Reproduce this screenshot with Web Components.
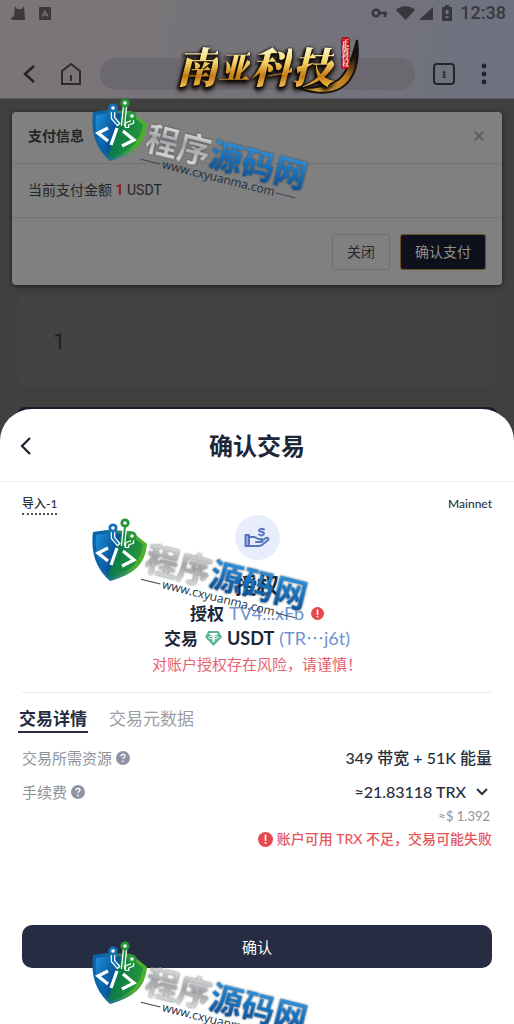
<!DOCTYPE html>
<html lang="zh-CN">
<head>
<meta charset="utf-8">
<meta name="viewport" content="width=device-width, initial-scale=1">
<title>确认交易</title>
<style>
  body {
    margin: 0;
    background: #404040;
    font-family: Lato, "Noto Sans CJK SC", sans-serif;
  }
</style>
</head>
<body>
<app-screen>
  <status-bar time="12:38"></status-bar>
  <browser-bar tabs="1"><brand-logo></brand-logo></browser-bar>
  <pay-page>
    <pay-dialog heading="支付信息">当前支付金额 <b>1</b> USDT</pay-dialog>
  </pay-page>
  <confirm-sheet heading="确认交易">
    <account-row slot="account" name="导入-1" network="Mainnet"></account-row>
    <approval-summary slot="summary"></approval-summary>
    <detail-tabs slot="details"></detail-tabs>
    <detail-row slot="details" label="交易所需资源">349 带宽 + 51K 能量</detail-row>
    <detail-row slot="details" label="手续费" expandable note="≈$ 1.392">≈21.83118 TRX</detail-row>
    <error-note slot="details">账户可用 TRX 不足，交易可能失败</error-note>
  </confirm-sheet>
  <site-watermark slot="overlay" style="top: 98px"></site-watermark>
  <site-watermark slot="overlay" style="top: 518px"></site-watermark>
  <site-watermark slot="overlay" style="top: 941px"></site-watermark>
</app-screen>

<script>
/** Base class: renders styles and markup into an open shadow root. */
class BaseElement extends HTMLElement {
  constructor() {
    super();
    this.attachShadow({ mode: 'open' });
  }

  connectedCallback() {
    this.shadowRoot.innerHTML = `<style>
      :host, *, *::before { box-sizing: border-box; }
      button, input { font: inherit; color: inherit; margin: 0; }
      svg { display: block; flex: none; }
      ${this.styles()}
    </style>${this.markup()}`;
  }

  attr(name) {
    return this.getAttribute(name) || '';
  }
}

const alertIcon = (size) => `
  <svg width="${size}" height="${size}" viewBox="0 0 16 16" aria-hidden="true">
    <circle cx="8" cy="8" r="8" fill="#e5484d"/>
    <path d="M8 3.6v5.2" stroke="#fff" stroke-width="1.8" stroke-linecap="round"/>
    <circle cx="8" cy="11.8" r="1.1" fill="#fff"/>
  </svg>`;

class AppScreen extends BaseElement {
  styles() {
    return `
      :host {
        display: flex;
        flex-direction: column;
        position: relative;
        min-height: 100vh;
        overflow: hidden;
      }
      .chrome-bg {
        position: absolute;
        inset: 0 0 auto 0;
        height: 99px;
        background: linear-gradient(100deg, #7b7577 0%, #767479 45%, #6e7180 100%);
        border-bottom: 1px solid #5c5c61;
      }
    `;
  }

  markup() {
    return `<div class="chrome-bg"></div><slot></slot><slot name="overlay"></slot>`;
  }
}
customElements.define('app-screen', AppScreen);

class StatusBar extends BaseElement {
  styles() {
    return `
      :host {
        display: flex;
        align-items: center;
        justify-content: space-between;
        position: relative;
        height: 26px;
        padding: 0 8px 0 10px;
        color: #37373d;
        font: 500 18px/26px Roboto, sans-serif;
      }
      .group { display: flex; align-items: center; gap: 8px; }
      .left { gap: 13px; }
    `;
  }

  markup() {
    return `
      <div class="group left">
        <svg width="16" height="14" viewBox="0 0 16 14" fill="#3d393b">
          <path d="M5 0l2 3h5l2-3 1 14H4l-4-1 4-3z"/>
        </svg>
        <svg width="12" height="13" viewBox="0 0 12 13">
          <rect width="12" height="13" rx="1" fill="#3d393b"/>
          <path d="M3 9.500L6 4l3 5.500M4 7.800h4" fill="none" stroke="#7b7577" stroke-width="1.300"/>
        </svg>
      </div>
      <div class="group">
        <svg width="17" height="10" viewBox="0 0 17 10" fill="none" stroke="#37373d">
          <circle cx="5" cy="5" r="3.200" stroke-width="2.600"/>
          <path d="M8 5h8M14 5v4" stroke-width="2.600"/>
        </svg>
        <svg width="38" height="14" viewBox="0 0 38 14" fill="#37373d">
          <path d="M0 4C5-1 14-1 19 4L9.500 14z"/>
          <path d="M37 1v13H23z"/>
        </svg>
        <svg width="10" height="16" viewBox="0 0 10 16">
          <path d="M3 0h4v2h3v14H0V2h3z" fill="#37373d"/>
          <path d="M3.500 5h3v4h-3zM3.500 11h3v2h-3z" fill="#6e7180"/>
        </svg>
        <span>${this.attr('time')}</span>
      </div>`;
  }
}
customElements.define('status-bar', StatusBar);

class BrowserBar extends BaseElement {
  styles() {
    return `
      :host {
        display: flex;
        align-items: center;
        gap: 18px;
        position: relative;
        height: 73px;
        padding: 22px 19px 0 16px;
        margin-bottom: 13px;
        color: #24242a;
      }
      button {
        display: grid;
        place-items: center;
        padding: 0;
        border: 0;
        background: none;
      }
      .back { width: 26px; }
      .address {
        flex: 1;
        min-width: 0;
        height: 32px;
        border: 0;
        border-radius: 16px;
        background: #6b696f;
      }
      .tabs {
        width: 22px;
        height: 22px;
        border: 2px solid #24242a;
        border-radius: 4px;
        font: 700 11px/16px "Liberation Serif", serif;
      }
      .brand {
        position: absolute;
        left: 50%;
        top: 8px;
        transform: translateX(-50%);
      }
    `;
  }

  markup() {
    return `
      <button class="back" aria-label="Back">
        <svg width="14" height="18" viewBox="0 0 14 18" fill="none" stroke="#24242a" stroke-width="2.500">
          <path d="M12 1L3 9l9 8"/>
        </svg>
      </button>
      <button aria-label="Home">
        <svg width="22" height="24" viewBox="0 0 22 24" fill="none" stroke="#2b2a2f" stroke-width="2" stroke-linejoin="round">
          <path d="M2 9l9-7 9 7v13H2z"/><path d="M11 13v6"/>
        </svg>
      </button>
      <input class="address" aria-label="Address">
      <button class="tabs" aria-label="Tabs">${this.attr('tabs')}</button>
      <button aria-label="Menu">
        <svg width="22" height="22" viewBox="0 0 22 22" fill="#24242a">
          <circle cx="11" cy="3" r="2.400"/><circle cx="11" cy="11" r="2.400"/><circle cx="11" cy="19" r="2.400"/>
        </svg>
      </button>
      <div class="brand"><slot></slot></div>`;
  }
}
customElements.define('browser-bar', BrowserBar);

class BrandLogo extends BaseElement {
  styles() {
    return `
      :host {
        display: block;
        position: relative;
        width: 194px;
        height: 66px;
        font-family: "Noto Serif CJK SC", "Noto Sans CJK SC", serif;
        font-weight: 900;
        font-style: italic;
      }
      svg { position: absolute; inset: 0; overflow: visible; }
      .word {
        display: flex;
        align-items: center;
        height: 62px;
        padding-left: 16px;
        filter: drop-shadow(0 0 1px #000) drop-shadow(-2px 2px 1px #120c08) drop-shadow(1px 2px 2px #1b1410);
      }
      .word span {
        background: linear-gradient(#fffbd0 20%, #f6d465 45%, #c37a15 68%, #f3c04b 85%);
        -webkit-background-clip: text;
        background-clip: text;
        color: transparent;
        font-size: 42px;
        line-height: 62px;
      }
      .word .small { font-size: 32px; }
      .seal {
        position: absolute;
        right: 4px;
        top: 3px;
        width: 9px;
        padding: 2px 1px;
        border-radius: 3px;
        background: #b40f1b;
        color: #f3d9d4;
        font-size: 7px;
        font-style: normal;
        line-height: 7px;
      }
    `;
  }

  markup() {
    return `
      <svg width="194" height="66" viewBox="0 0 194 66">
        <defs>
          <linearGradient id="sweep" x1="0" y1="1" x2="1" y2="0">
            <stop offset="0" stop-color="#f0c04a"/><stop offset=".55" stop-color="#b97a1c"/><stop offset=".8" stop-color="#1a1512"/>
          </linearGradient>
        </defs>
        <path d="M134 52c16 4 34 0 44-6 8-6 14-20 19-40 3 20-2 40-16 48-14 8-32 5-47-2z" fill="url(#sweep)" stroke="#17110d" stroke-width="2"/>
      </svg>
      <div class="word"><span>南</span><span class="small">亚</span><span>科</span><span>技</span></div>
      <div class="seal">正版授权</div>`;
  }
}
customElements.define('brand-logo', BrandLogo);

class PayPage extends BaseElement {
  styles() {
    return `
      :host {
        display: block;
        padding: 0 12px;
        font-family: Roboto, "Noto Sans CJK SC", sans-serif;
      }
      .amount {
        display: block;
        width: calc(100% - 10px);
        height: 92px;
        margin: 10px 5px 20px;
        padding: 0 36px;
        border: 0;
        border-radius: 12px;
        background: #434343;
        color: #1f1f1f;
        font-size: 22px;
      }
      .submit {
        height: 32px;
        margin: 0 5px;
        border-radius: 8px;
        background: #161c29;
      }
    `;
  }

  markup() {
    return `
      <slot></slot>
      <input class="amount" aria-label="金额" value="1">
      <div class="submit"></div>`;
  }
}
customElements.define('pay-page', PayPage);

class PayDialog extends BaseElement {
  styles() {
    return `
      :host {
        display: block;
        border-radius: 4px;
        background: #808080;
        box-shadow: 0 1px 5px #1c1c1c;
        color: #262626;
        font-size: 14px;
        line-height: 20px;
      }
      header, p, footer { display: flex; align-items: center; padding: 16px; }
      header { justify-content: space-between; height: 52px; padding-top: 12px; border-bottom: 1px solid #757575; }
      h2 { margin: 0; font-size: 14px; font-weight: 700; }
      p { display: block; height: 54px; margin: 0; border-bottom: 1px solid #737373; }
      ::slotted(b) { color: #8e1720; }
      footer { justify-content: flex-end; gap: 10px; height: 67px; }
      footer button {
        height: 36px;
        padding: 0 14px;
        border: 1px solid #6e7072;
        border-radius: 3px;
        background: none;
      }
      footer .primary { border: 1px solid #6b5026; background: #0e111b; color: #8f8f8f; }
      .close { display: grid; padding: 2px; border: 0; background: none; }
    `;
  }

  markup() {
    return `
      <header>
        <h2>${this.attr('heading')}</h2>
        <button class="close" aria-label="Close">
          <svg width="10" height="10" viewBox="0 0 10 10" stroke="#5d5d5d" stroke-width="2"><path d="M1 1l8 8M9 1L1 9"/></svg>
        </button>
      </header>
      <p><slot></slot></p>
      <footer>
        <button>关闭</button>
        <button class="primary">确认支付</button>
      </footer>`;
  }
}
customElements.define('pay-dialog', PayDialog);

class ConfirmSheet extends BaseElement {
  styles() {
    return `
      :host {
        display: flex;
        flex: 1;
        flex-direction: column;
        position: relative;
        margin-top: -30px;
        border-radius: 32px 32px 0 0;
        background: #fff;
        color: #26303f;
      }
      header {
        display: grid;
        grid-template-columns: 24px 1fr 24px;
        align-items: center;
        height: 73px;
        padding: 2px 14px 0;
        border-bottom: 1px solid #eeeef2;
      }
      h1 { margin: 0; font-size: 24px; font-weight: 700; line-height: 32px; text-align: center; color: #1c2738; }
      .back { display: grid; place-items: center; padding: 0; border: 0; background: none; }
      main { padding: 12px 22px 0; }
      .details { display: flex; flex-direction: column; margin-top: 15px; border-top: 1px solid #ebebee; padding-top: 14px; }
      footer { margin-top: auto; padding: 24px 22px 56px; }
      .confirm {
        display: block;
        width: 100%;
        height: 43px;
        border: 0;
        border-radius: 10px;
        background: #262d42;
        color: #fff;
        font-size: 15px;
      }
    `;
  }

  markup() {
    return `
      <header>
        <button class="back" aria-label="返回">
          <svg width="12" height="18" viewBox="0 0 12 18" fill="none" stroke="#1c2030" stroke-width="2.200"><path d="M10 1L2 9l8 8"/></svg>
        </button>
        <h1>${this.attr('heading')}</h1>
      </header>
      <main>
        <slot name="account"></slot>
        <slot name="summary"></slot>
        <div class="details"><slot name="details"></slot></div>
      </main>
      <footer><button class="confirm">确认</button></footer>`;
  }
}
customElements.define('confirm-sheet', ConfirmSheet);

class AccountRow extends BaseElement {
  styles() {
    return `
      :host {
        display: flex;
        justify-content: space-between;
        height: 21px;
        font-size: 12px;
        font-weight: 500;
        line-height: 20px;
      }
      .name { height: 21px; border-bottom: 2px dotted #4a5160; }
    `;
  }

  markup() {
    return `<span class="name">${this.attr('name')}</span><span>${this.attr('network')}</span>`;
  }
}
customElements.define('account-row', AccountRow);

class ApprovalSummary extends BaseElement {
  styles() {
    return `
      :host { display: flex; flex-direction: column; align-items: center; color: #1c2738; }
      .badge {
        display: grid;
        place-items: center;
        width: 45px;
        height: 45px;
        border-radius: 50%;
        background: #e8edfb;
      }
      h2 { margin: 9px 0 0; font-size: 22px; line-height: 32px; }
      .line {
        display: flex;
        align-items: center;
        gap: 5px;
        height: 25px;
        font-size: 17px;
        font-weight: 700;
        line-height: 25px;
        white-space: nowrap;
      }
      a { color: #6f92d2; font-size: 18px; font-weight: 400; text-decoration: none; }
      .line svg { margin-left: 2px; }
      .token { font-size: 18px; }
      p { margin: 0; color: #e8616c; font-size: 15px; line-height: 26px; }
    `;
  }

  markup() {
    return `
      <div class="badge">
        <svg width="26" height="22" viewBox="0 0 26 22" fill="none" stroke="#5776bd" stroke-width="2" stroke-linecap="round" stroke-linejoin="round">
          <path d="M1.500 8h3.500v11H1.500z" fill="#9db2e2"/>
          <path d="M5 10h5c2 0 3 2 5 2h2c2 0 2 3 0 3h-5M17 14l5-3c2-1 3 1 2 2l-6 5c-1 1-2 1-4 1H5"/>
          <path d="M20 2.500c-2-1.500-5-.5-5 1s5 1 5 3-3 2.500-5 1"/>
        </svg>
      </div>
      <h2>授权</h2>
      <div class="line"><span>授权</span><a href="#spender">TV4...xFb</a>${alertIcon(13)}</div>
      <div class="line">
        <span>交易</span>
        <svg width="17" height="15" viewBox="0 0 17 15">
          <path d="M3.500 0h10L17 6l-8.500 9L0 6z" fill="#59b693"/>
          <path d="M4.500 3h8M8.500 3v8" stroke="#fff" stroke-width="2"/>
          <ellipse cx="8.500" cy="6.500" rx="5" ry="1.400" fill="none" stroke="#fff"/>
        </svg>
        <span class="token">USDT</span><a href="#contract">(TR⋯j6t)</a>
      </div>
      <p>对账户授权存在风险，请谨慎！</p>`;
  }
}
customElements.define('approval-summary', ApprovalSummary);

class DetailTabs extends BaseElement {
  styles() {
    return `
      :host { display: flex; gap: 20px; margin: 0 0 8px -4px; }
      button {
        height: 26px;
        padding: 0 1px;
        border: 0;
        border-bottom: 2px solid transparent;
        background: none;
        color: #9a9da6;
        font-size: 17px;
        line-height: 24px;
      }
      button[aria-selected="true"] { border-color: #262d42; color: #262d42; font-weight: 700; }
    `;
  }

  markup() {
    return `
      <button role="tab" aria-selected="true">交易详情</button>
      <button role="tab" aria-selected="false">交易元数据</button>`;
  }

  connectedCallback() {
    super.connectedCallback();
    const tabs = [...this.shadowRoot.querySelectorAll('button')];
    tabs.forEach((tab) => tab.addEventListener('click', () => {
      tabs.forEach((t) => t.setAttribute('aria-selected', String(t === tab)));
    }));
  }
}
customElements.define('detail-tabs', DetailTabs);

class DetailRow extends BaseElement {
  styles() {
    return `
      :host { display: block; line-height: 32px; }
      .row { display: flex; align-items: center; justify-content: space-between; height: 34px; }
      .label { display: flex; align-items: center; gap: 4px; color: #8f929b; font-size: 15px; }
      .value { display: flex; align-items: center; gap: 6px; font-size: 16px; font-weight: 500; }
      .toggle { display: grid; place-items: center; width: 20px; height: 20px; padding: 0; border: 0; background: none; }
      .note { padding-right: 2px; color: #8f929b; font-size: 13px; line-height: 14px; text-align: right; }
    `;
  }

  markup() {
    const toggle = this.hasAttribute('expandable') ? `
      <button class="toggle" aria-label="展开">
        <svg width="12" height="8" viewBox="0 0 12 8" fill="none" stroke="#26303f" stroke-width="2"><path d="M1 1l5 5 5-5"/></svg>
      </button>` : '';
    const note = this.attr('note') ? `<div class="note">${this.attr('note')}</div>` : '';

    return `
      <div class="row">
        <span class="label">${this.attr('label')}
          <svg width="14" height="14" viewBox="0 0 14 14">
            <circle cx="7" cy="7" r="7" fill="#8e93a8"/>
            <path d="M5 5.500c0-3 4-2.600 4-.4 0 1.500-2 1.400-2 3" fill="none" stroke="#fff" stroke-width="1.300"/>
            <circle cx="7" cy="10.400" r=".9" fill="#fff"/>
          </svg>
        </span>
        <span class="value"><slot></slot>${toggle}</span>
      </div>${note}`;
  }
}
customElements.define('detail-row', DetailRow);

class ErrorNote extends BaseElement {
  styles() {
    return `
      :host {
        display: flex;
        align-items: center;
        justify-content: flex-end;
        gap: 4px;
        margin-top: 4px;
        color: #e5565b;
        font-size: 14px;
        font-weight: 500;
        line-height: 24px;
      }
    `;
  }

  markup() {
    return `${alertIcon(15)}<span><slot></slot></span>`;
  }
}
customElements.define('error-note', ErrorNote);

/** Tilted site mark laid over the screen. */
class SiteWatermark extends BaseElement {
  styles() {
    return `
      :host {
        display: flex;
        position: absolute;
        left: 91px;
        pointer-events: none;
      }
      .mark {
        height: 48px;
        margin: 21px 0 0 2px;
        transform: rotate(14deg);
        transform-origin: 0 0;
        white-space: nowrap;
      }
      .name {
        font: 700 33px/34px "Noto Sans CJK SC", sans-serif;
        filter: drop-shadow(0 0 1px rgba(30, 35, 45, .7));
      }
      .name span { -webkit-background-clip: text; background-clip: text; color: transparent; }
      .grey { background-image: linear-gradient(#e6e6e6 15%, #a0a2a4 50%, #d6d6d6 85%); }
      .blue { background-image: linear-gradient(#3a9ae0 10%, #1573c0 50%, #0d4f93 90%); }
      .url {
        display: flex;
        align-items: center;
        gap: 2px;
        color: #1e2c3e;
        font: 500 12px/14px "Open Sans", sans-serif;
      }
      .url::before, .url::after { content: ""; width: 20px; height: 1px; background: #3a4656; }
    `;
  }

  markup() {
    return `
      <svg width="58" height="64" viewBox="0 0 58 64">
        <defs>
          <linearGradient id="rim"><stop offset=".2" stop-color="#0b63a8"/><stop offset=".8" stop-color="#4fae2d"/></linearGradient>
          <linearGradient id="fill" x1="0" y1="0" x2="1" y2=".3"><stop offset="0" stop-color="#1d8fd6"/><stop offset=".48" stop-color="#07539a"/><stop offset=".52" stop-color="#0b7a4a"/><stop offset="1" stop-color="#23963a"/></linearGradient>
        </defs>
        <path d="M2 14l14-2 24 1 16 13c-2 21-13 30-37 37C7 52-1 37 2 14z" fill="url(#rim)"/>
        <path d="M5 17l12-2 22 1 13 11c-3 18-13 26-32 33C10 50 3 37 5 17z" fill="url(#fill)"/>
        <g fill="none" stroke="#fff" stroke-width="4.500"><path d="M22 13v7l6 7M34 8l-2 20M41 21v3l-5 2v4"/></g>
        <g fill="none" stroke-width="2">
          <path d="M22 13v7l5 6" stroke="#1672b8"/>
          <path d="M34 8l-2 20M41 21v3l-5 2v3" stroke="#23953a"/>
        </g>
        <g fill="#fff" stroke-width="2.800">
          <circle cx="22" cy="10" r="3.200" stroke="#1672b8"/>
          <circle cx="34" cy="5" r="3.200" stroke="#23953a"/>
          <circle cx="41" cy="18" r="3.200" stroke="#23953a"/>
        </g>
        <path d="M17 30L7 35l10 8M26 30l-6 17M32 33l11 9-12 6" fill="none" stroke="#fff" stroke-width="3.200"/>
      </svg>
      <div class="mark">
        <div class="name"><span class="grey">程序</span><span class="blue">源码网</span></div>
        <div class="url">www.cxyuanma.com</div>
      </div>`;
  }
}
customElements.define('site-watermark', SiteWatermark);
</script>
</body>
</html>
